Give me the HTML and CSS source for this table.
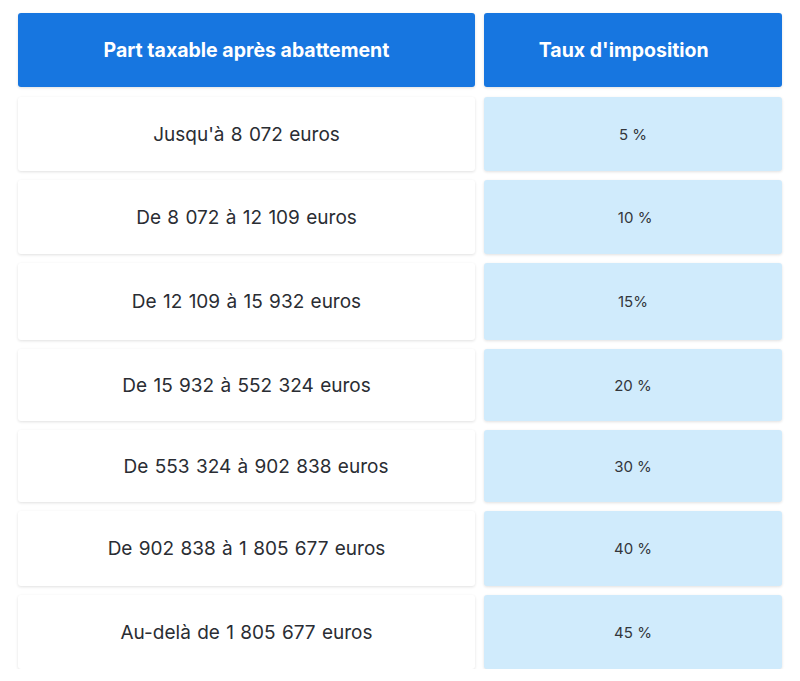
FILE: index.html
```html
<!DOCTYPE html>
<html lang="fr">
<head>
<meta charset="utf-8">
<title>Barème</title>
<link rel="stylesheet" href="styles.css">
</head>
<body>
<div class="table">
  <div class="cell head">Part taxable après abattement</div>
  <div class="cell head">Taux d'imposition&nbsp;&nbsp;&nbsp;&nbsp;</div>

  <div class="cell left">Jusqu'à 8 072 euros</div>
  <div class="cell right">5 %</div>

  <div class="cell left">De 8 072 à 12 109 euros</div>
  <div class="cell right">&nbsp;10 %</div>

  <div class="cell left">De 12 109 à 15 932 euros</div>
  <div class="cell right">15%</div>

  <div class="cell left">De 15 932 à 552 324 euros</div>
  <div class="cell right">20 %</div>

  <div class="cell left">&nbsp;&nbsp;&nbsp;De 553 324 à 902 838 euros</div>
  <div class="cell right">30 %</div>

  <div class="cell left">De 902 838 à 1 805 677 euros</div>
  <div class="cell right">40 %</div>

  <div class="cell left">Au-delà de 1 805 677 euros</div>
  <div class="cell right">45 %</div>
</div>
</body>
</html>
```

FILE: styles.css
```css
html, body {
  margin: 0;
  padding: 0;
  background: #ffffff;
}

body {
  font-family: Inter, "Noto Sans", sans-serif;
  color: #2a2d33;
}

.table {
  display: grid;
  grid-template-columns: 457px 298px;
  grid-template-rows: 75px 74px 74px 77px 72px 72px 75px 74px;
  column-gap: 9px;
  row-gap: 9px;
  padding: 13px 0 0 18px;
}

.cell {
  display: flex;
  align-items: center;
  justify-content: center;
  border-radius: 3px;
  box-shadow: 0 1px 3px rgba(0, 0, 0, 0.12);
  white-space: pre;
}

.head {
  background: #1776e0;
  color: #ffffff;
  font-weight: 700;
  font-size: 19.5px;
  margin-bottom: 1px;
}

.left {
  background: #ffffff;
  font-size: 19px;
  word-spacing: 1px;
}

.right {
  background: #d0ebfc;
  font-size: 15px;
  color: #33363b;
}
```
